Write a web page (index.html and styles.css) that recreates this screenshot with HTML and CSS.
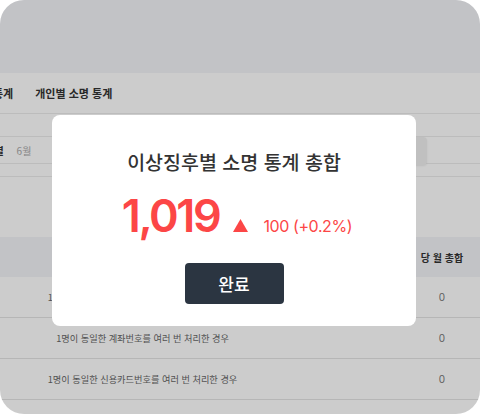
FILE: index.html
```html
<!DOCTYPE html>
<html lang="ko">
<head>
<meta charset="utf-8">
<link rel="stylesheet" href="styles.css">
</head>
<body>
<div class="screen">
  <div class="topbar"></div>
  <nav class="tabs">
    <div class="tabs-inner">
      <span class="tab">이상징후별 소명 통계</span>
      <span class="tab">개인별 소명 통계</span>
    </div>
  </nav>
  <div class="filters">
    <div class="frow frow-a"></div>
    <div class="frow frow-b">
      <span class="flabel">기준 월별</span>
      <span class="fvalue">6월</span>
      <span class="fbox"></span>
    </div>
    <div class="frow frow-c"></div>
  </div>
  <div class="spacer"></div>
  <div class="table">
    <div class="trow thead">
      <div class="cell"></div>
      <div class="cell"></div>
      <div class="cell">당 월 총합</div>
    </div>
    <div class="trow">
      <div class="cell">1명이 동일한 주민등록번호를 여러 번 처리한 경우</div>
      <div class="cell"></div>
      <div class="cell num">0</div>
    </div>
    <div class="trow">
      <div class="cell">1명이 동일한 계좌번호를 여러 번 처리한 경우</div>
      <div class="cell"></div>
      <div class="cell num">0</div>
    </div>
    <div class="trow">
      <div class="cell">1명이 동일한 신용카드번호를 여러 번 처리한 경우</div>
      <div class="cell"></div>
      <div class="cell num">0</div>
    </div>
    <div class="trow">
      <div class="cell"></div>
      <div class="cell"></div>
      <div class="cell num"></div>
    </div>
  </div>

  <div class="dim"></div>

  <div class="modal">
    <h2 class="modal-title">이상징후별 소명 통계 총합</h2>
    <div class="stat">
      <span class="stat-num">1,019</span>
      <svg class="stat-arrow" width="15" height="13" viewBox="0 0 15 13"><polygon points="7.5,0 15,13 0,13" fill="#fc4646"/></svg>
      <span class="stat-diff">100 (+0.2%)</span>
    </div>
    <button class="btn">완료</button>
  </div>
</div>
</body>
</html>
```

FILE: styles.css
```css
* { box-sizing: border-box; }
html, body { margin: 0; padding: 0; background: #fff; }
body { font-family: "Noto Sans CJK KR", "Noto Sans", sans-serif; }

.screen {
  position: relative;
  width: 480px;
  height: 414px;
  border-radius: 24px;
  overflow: hidden;
  background: #fff;
}

.topbar { height: 73px; background: #f3f4f8; }

.tabs {
  height: 41px;
  border-bottom: 1px solid #ececec;
  display: flex;
  align-items: center;
  overflow: hidden;
}
.tabs-inner {
  display: flex;
  gap: 22px;
  margin-left: -84px;
  white-space: nowrap;
}
.tab { font-size: 11px; font-weight: 700; color: #333; }

.frow { border-bottom: 1px solid #ececec; }
.frow-a { height: 23px; }
.frow-b {
  height: 27px;
  display: flex;
  align-items: center;
  margin-left: -36px;
  gap: 13px;
}
.flabel { font-size: 10px; font-weight: 700; color: #333; }
.fvalue { font-size: 10px; color: #aaa; }
.fbox {
  margin-left: auto;
  margin-right: 53px;
  align-self: flex-start;
  width: 27px;
  height: 28px;
  margin-bottom: -2px;
  border-radius: 0 4px 4px 0;
  background: #f1f1f1;
  box-shadow: 0 1px 2px rgba(0,0,0,0.08);
}
.frow-c { height: 13px; }

.spacer { height: 60px; }

.trow {
  display: grid;
  grid-template-columns: 285px 1fr 76px;
  height: 41px;
  border-bottom: 1px solid #e4e4e4;
}
.thead { height: 40px; background: #f3f4f8; border-bottom: none; }
.cell {
  display: flex;
  align-items: center;
  justify-content: center;
  font-size: 9.2px;
  color: #666;
  white-space: nowrap;
}
.thead .cell { font-weight: 700; color: #333; font-size: 10px; }
.num { font-family: "Inter", "Noto Sans", sans-serif; font-size: 10px; color: #777; }

.dim {
  position: absolute;
  inset: 0;
  background: rgba(0,0,0,0.2);
}

.modal {
  position: absolute;
  left: 52px;
  top: 115px;
  width: 364px;
  height: 211px;
  background: #fff;
  border-radius: 8px;
  display: flex;
  flex-direction: column;
  align-items: center;
  padding-top: 33px;
}
.modal-title {
  margin: 0;
  font-size: 19.5px;
  line-height: 28px;
  font-weight: 500;
  color: #333;
}
.stat {
  display: flex;
  align-items: baseline;
  margin-top: 15px;
  margin-left: 6px;
  color: #fc4646;
  font-family: "Inter", "Noto Sans", sans-serif;
}
.stat-num { font-size: 45px; line-height: 50px; font-weight: 600; letter-spacing: -2.4px; }
.stat-arrow { margin-left: 14px; }
.stat-diff { margin-left: 15px; font-size: 16px; font-weight: 400; letter-spacing: -0.4px; }
.btn {
  margin-top: 22px;
  width: 99px;
  height: 41px;
  border: none;
  border-radius: 4px;
  background: #2b3541;
  color: #fff;
  font-family: "Noto Sans CJK KR", sans-serif;
  font-size: 17px;
  font-weight: 500;
}
```
